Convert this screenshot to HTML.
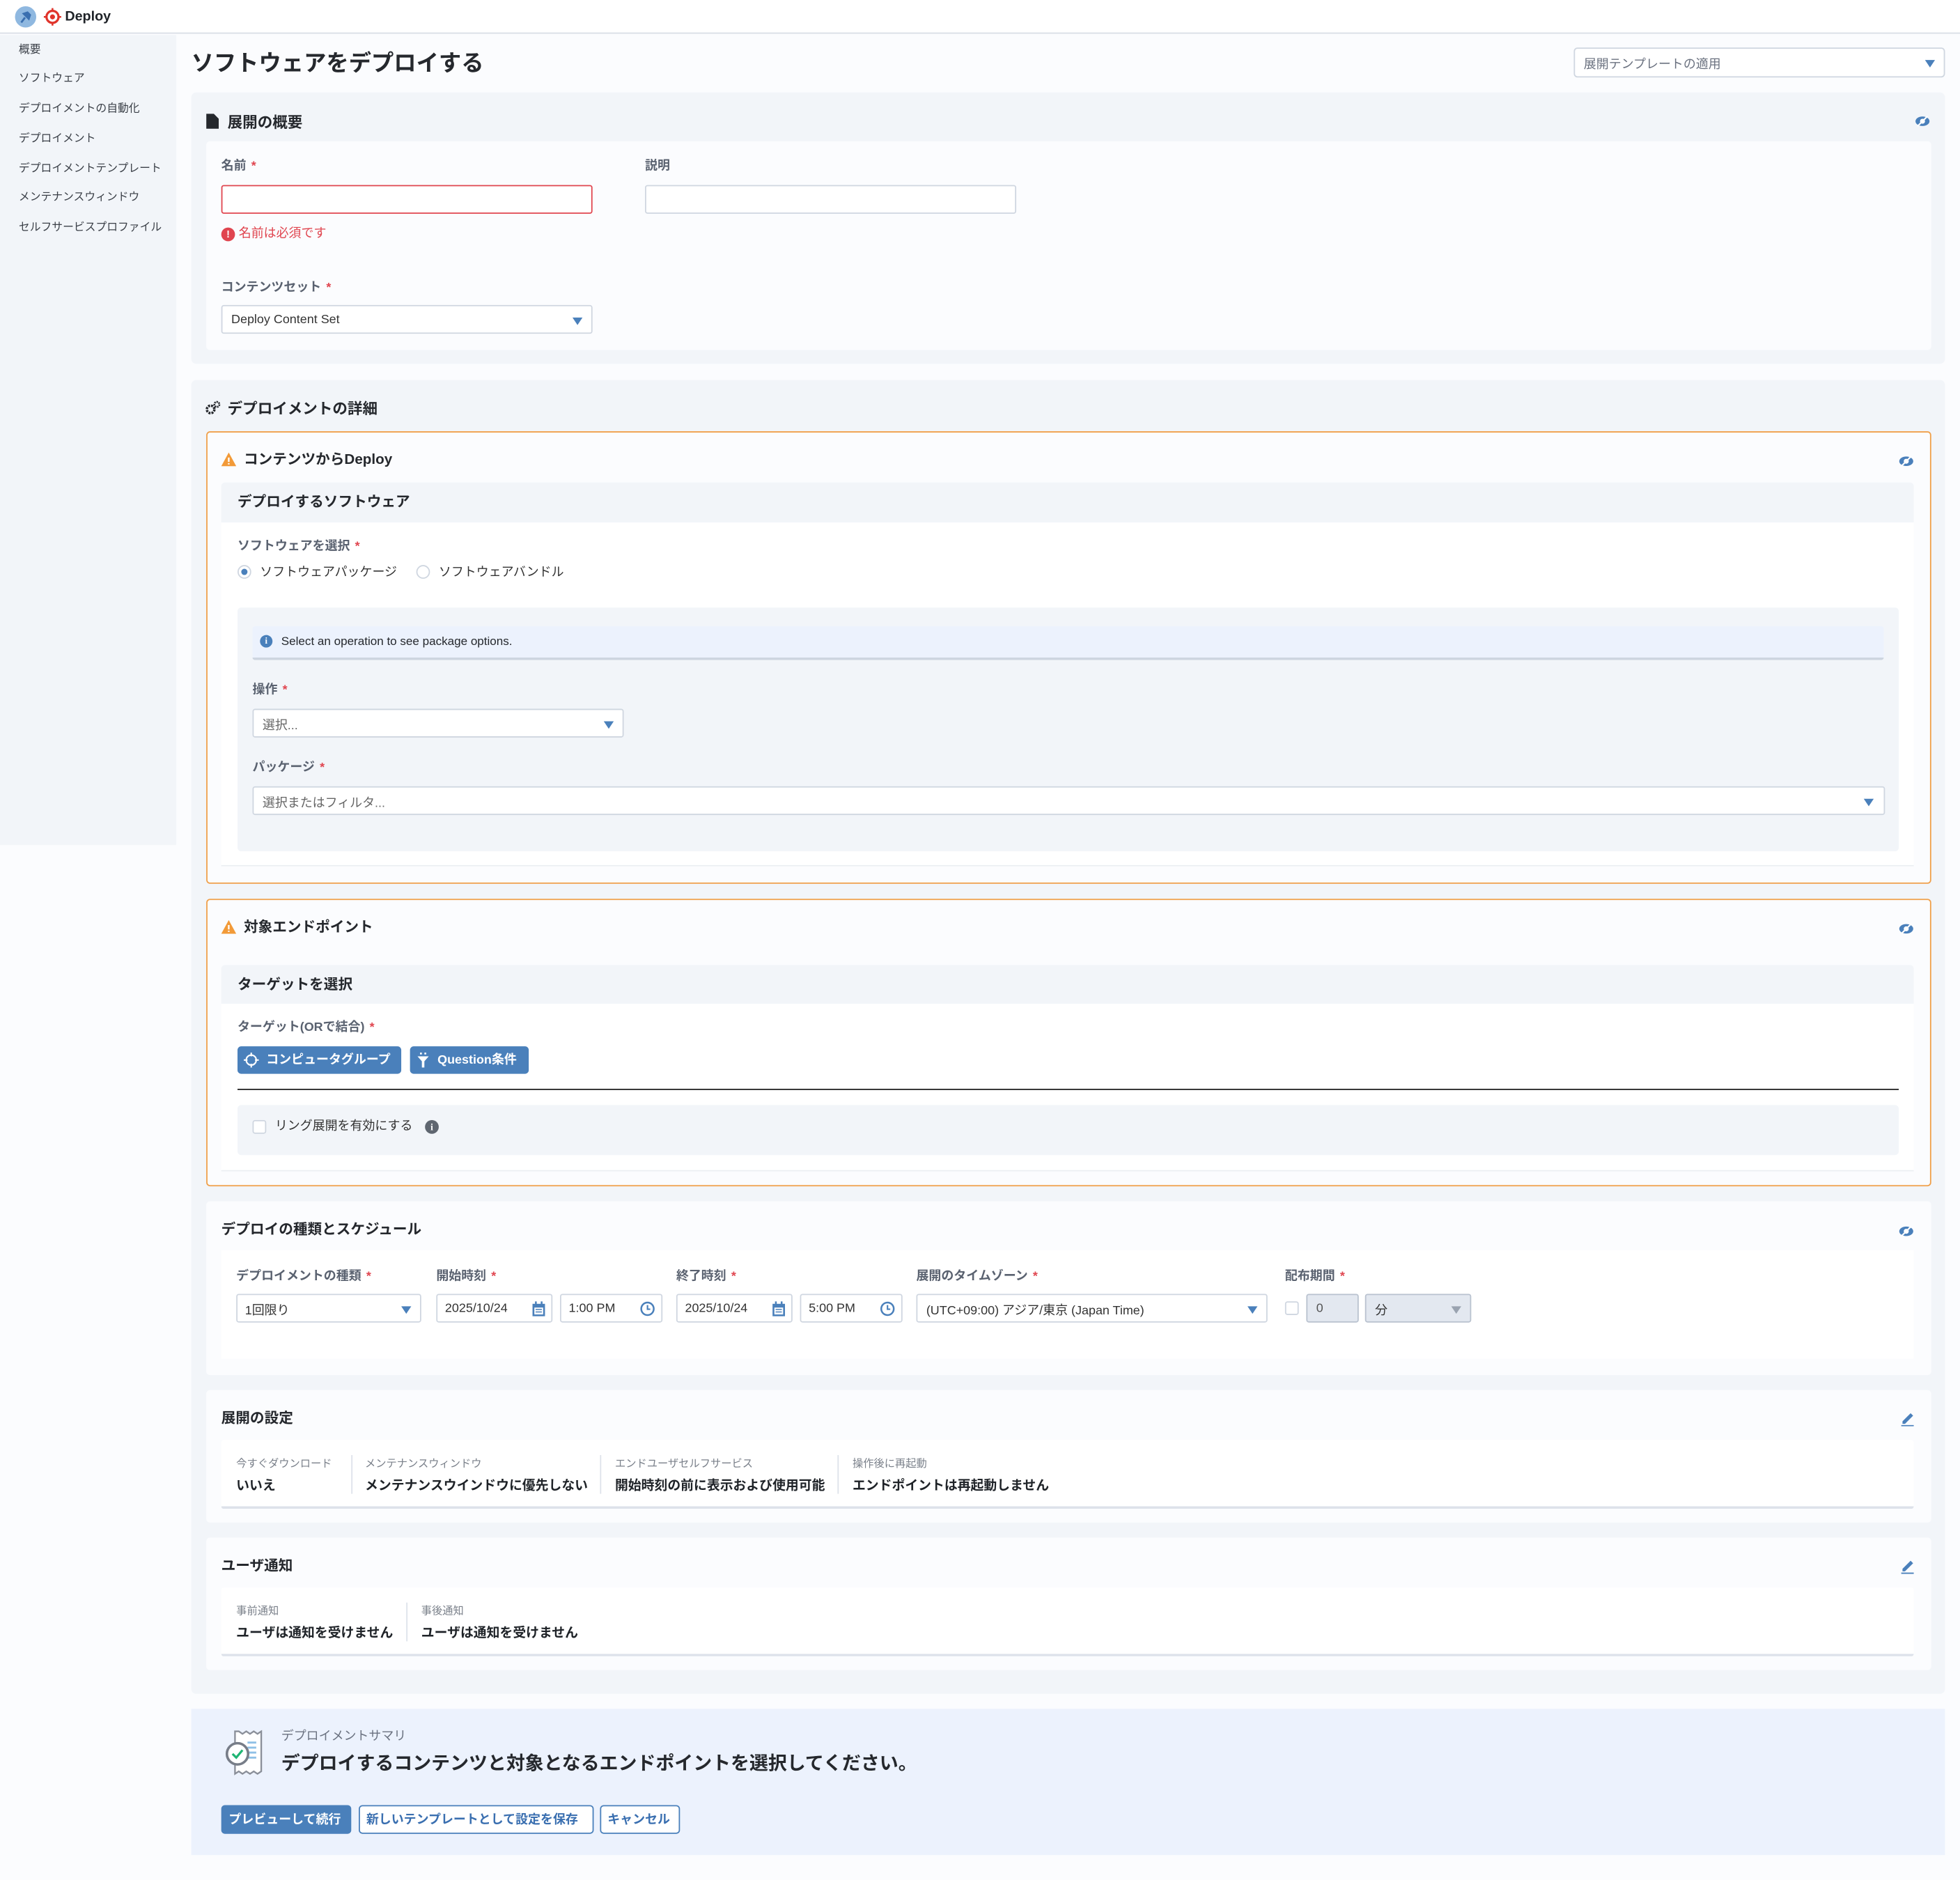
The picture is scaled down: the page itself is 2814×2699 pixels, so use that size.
<!DOCTYPE html>
<html><head><meta charset="utf-8"><style>
*{box-sizing:border-box;margin:0;padding:0}
html,body{width:2814px;height:2698px;overflow:hidden;background:#fbfcfe}
#w{position:absolute;left:0;top:0;width:1568px;height:1504px;transform:scale(1.79464);transform-origin:0 0;font-family:"Liberation Sans","Noto Sans CJK JP",sans-serif;color:#1f2328}
.a{position:absolute}
.t{position:absolute;white-space:nowrap;line-height:1;transform:translateY(-42%)}
.lbl{font-size:10px;font-weight:bold;color:#5a6270}
.req{color:#e0454f;margin-left:4px}
.inp{position:absolute;background:#fff;border:1px solid #cfd6e0;border-radius:2px;height:23px}
.it{position:absolute;top:50%;transform:translateY(-50%);left:7px;font-size:10px;color:#333;white-space:nowrap}
.arr{position:absolute;top:50%;margin-top:-2px;width:0;height:0;border-left:4.5px solid transparent;border-right:4.5px solid transparent;border-top:6px solid #4a80bb}
.gray{background:#f2f5f9}
.h{font-size:12px;font-weight:bold;color:#25282d}
.side{font-size:8.8px;color:#3b4048}
.sl{font-size:8.5px;color:#7a808a}
.sv{font-size:10.5px;font-weight:bold;color:#1f2328}
</style></head><body><div id="w">
<!-- header -->
<div class="a" style="left:0;top:0;width:1568px;height:27px;background:#fff;border-bottom:1px solid #d9dee6"></div>
<div class="a" style="left:12px;top:5px;width:17px;height:17px;border-radius:50%;background:#8fb8e0"></div>
<svg class="a" style="left:14px;top:7px" width="13" height="13" viewBox="0 0 13 13"><path d="M3 11 L6 7 M5 4 L9 8 L10 5 L8 3 Z" stroke="#3a6fb0" stroke-width="1.6" fill="#3a6fb0"/></svg>
<svg class="a" style="left:35px;top:6px" width="14" height="15" viewBox="0 0 14 15"><circle cx="7" cy="7.5" r="4.8" fill="none" stroke="#e0342b" stroke-width="1.8"/><circle cx="7" cy="7.5" r="2" fill="#e0342b"/><path d="M7 0.5v2.5M7 12v2.5M0 7.5h2.2M11.8 7.5h2.2" stroke="#e0342b" stroke-width="1.4"/></svg>
<div class="t" style="left:52px;top:13px;font-size:11px;font-weight:bold">Deploy</div>
<!-- sidebar -->
<div class="a gray" style="left:0;top:28px;width:141px;height:648px"></div>
<div class="t side" style="left:15px;top:39px">概要</div>
<div class="t side" style="left:15px;top:62px">ソフトウェア</div>
<div class="t side" style="left:15px;top:86px">デプロイメントの自動化</div>
<div class="t side" style="left:15px;top:110px">デプロイメント</div>
<div class="t side" style="left:15px;top:134px">デプロイメントテンプレート</div>
<div class="t side" style="left:15px;top:157px">メンテナンスウィンドウ</div>
<div class="t side" style="left:15px;top:181px">セルフサービスプロファイル</div>
<!-- title -->
<div class="t" style="left:153px;top:49px;font-size:18px;font-weight:bold;color:#25282d">ソフトウェアをデプロイする</div>
<div class="inp" style="left:1259px;top:38px;width:297px;height:24px;border-radius:3px"><div class="it" style="color:#6b7280">展開テンプレートの適用</div><div class="arr" style="right:7px"></div></div>
<!-- section 1 -->
<div class="a gray" style="left:153px;top:74px;width:1403px;height:217px;border-radius:4px"></div>
<svg class="a" style="left:165px;top:91px" width="10" height="12" viewBox="0 0 10 12"><path d="M0 0H6L10 4V12H0Z" fill="#25282d"/></svg>
<div class="t h" style="left:182px;top:97px">展開の概要</div>
<svg class="a" style="left:1532px;top:92px" width="12" height="10" viewBox="0 0 12 10"><ellipse cx="6" cy="5" rx="5.6" ry="3.8" fill="#4a80bb"/><circle cx="6" cy="5" r="2" fill="#fff"/><path d="M2 9L10 1" stroke="#fff" stroke-width="1.2"/></svg>
<div class="a" style="left:165px;top:113px;width:1380px;height:167px;background:#fbfcfe;border-radius:3px"></div>
<div class="t lbl" style="left:177px;top:133px">名前<span class="req">*</span></div>
<div class="inp" style="left:177px;top:148px;width:297px;border-color:#e0454f"></div>
<div class="a" style="left:177px;top:182px;width:11px;height:11px;border-radius:50%;background:#e0454f;color:#fff;font-size:8px;font-weight:bold;text-align:center;line-height:11px">!</div>
<div class="t" style="left:191px;top:187px;font-size:10px;color:#e0454f">名前は必須です</div>
<div class="t lbl" style="left:516px;top:133px">説明</div>
<div class="inp" style="left:516px;top:148px;width:297px"></div>
<div class="t lbl" style="left:177px;top:230px">コンテンツセット<span class="req">*</span></div>
<div class="inp" style="left:177px;top:244px;width:297px"><div class="it">Deploy Content Set</div><div class="arr" style="right:7px"></div></div>
<!-- section 2 -->
<div class="a gray" style="left:153px;top:304px;width:1403px;height:1051px;border-radius:4px"></div>
<svg class="a" style="left:164px;top:320px" width="13" height="12" viewBox="0 0 13 12"><circle cx="4.5" cy="7.5" r="3" fill="none" stroke="#25282d" stroke-width="2" stroke-dasharray="1.6 0.8"/><circle cx="9.5" cy="3.5" r="2" fill="none" stroke="#25282d" stroke-width="1.5" stroke-dasharray="1.2 0.6"/></svg>
<div class="t h" style="left:182px;top:326px">デプロイメントの詳細</div>
<!-- orange card 1 -->
<div class="a" style="left:165px;top:345px;width:1380px;height:362px;background:#fbfcfe;border:1px solid #f0a04a;border-radius:3px"></div>
<svg class="a" style="left:177px;top:362px" width="12" height="11" viewBox="0 0 12 11"><path d="M6 0L12 11H0Z" fill="#f29a38"/><path d="M6 4v3.5M6 8.5v1" stroke="#fff" stroke-width="1.3"/></svg>
<div class="t" style="left:195px;top:368px;font-size:11.5px;font-weight:bold;color:#25282d">コンテンツからDeploy</div>
<svg class="a" style="left:1519px;top:364px" width="12" height="10" viewBox="0 0 12 10"><ellipse cx="6" cy="5" rx="5.6" ry="3.8" fill="#4a80bb"/><circle cx="6" cy="5" r="2" fill="#fff"/><path d="M2 9L10 1" stroke="#fff" stroke-width="1.2"/></svg>
<div class="a gray" style="left:177px;top:386px;width:1354px;height:32px;border-radius:3px 3px 0 0"></div>
<div class="a" style="left:177px;top:418px;width:1354px;height:275px;background:#fff;border-bottom:1px solid #eceff3"></div>
<div class="t" style="left:190px;top:402px;font-size:11.5px;font-weight:bold;color:#25282d">デプロイするソフトウェア</div>
<div class="t lbl" style="left:190px;top:437px">ソフトウェアを選択<span class="req">*</span></div>
<div class="a" style="left:190px;top:452px;width:11px;height:11px;border-radius:50%;border:1px solid #cfd6e0;background:#fff"></div>
<div class="a" style="left:193px;top:455px;width:5px;height:5px;border-radius:50%;background:#4a80bb"></div>
<div class="t" style="left:208px;top:458px;font-size:10px;color:#333">ソフトウェアパッケージ</div>
<div class="a" style="left:333px;top:452px;width:11px;height:11px;border-radius:50%;border:1px solid #cfd6e0;background:#fff"></div>
<div class="t" style="left:351px;top:458px;font-size:10px;color:#333">ソフトウェアバンドル</div>
<div class="a gray" style="left:190px;top:486px;width:1329px;height:195px;border-radius:3px"></div>
<div class="a" style="left:202px;top:501px;width:1305px;height:27px;background:#ecf2fd;border-bottom:2px solid #cdd5e0;border-radius:2px"></div>
<div class="a" style="left:208px;top:508px;width:10px;height:10px;border-radius:50%;background:#4a80bb;color:#fff;font-size:7px;font-weight:bold;text-align:center;line-height:10px;font-family:'Liberation Serif',serif">i</div>
<div class="t" style="left:225px;top:513px;font-size:9.5px;color:#25282d">Select an operation to see package options.</div>
<div class="t lbl" style="left:202px;top:552px">操作<span class="req">*</span></div>
<div class="inp" style="left:202px;top:567px;width:297px"><div class="it" style="color:#666">選択...</div><div class="arr" style="right:7px"></div></div>
<div class="t lbl" style="left:202px;top:614px">パッケージ<span class="req">*</span></div>
<div class="inp" style="left:202px;top:629px;width:1306px"><div class="it" style="color:#666">選択またはフィルタ...</div><div class="arr" style="right:8px"></div></div>
<!-- orange card 2 -->
<div class="a" style="left:165px;top:719px;width:1380px;height:230px;background:#fbfcfe;border:1px solid #f0a04a;border-radius:3px"></div>
<svg class="a" style="left:177px;top:736px" width="12" height="11" viewBox="0 0 12 11"><path d="M6 0L12 11H0Z" fill="#f29a38"/><path d="M6 4v3.5M6 8.5v1" stroke="#fff" stroke-width="1.3"/></svg>
<div class="t" style="left:195px;top:742px;font-size:11.5px;font-weight:bold;color:#25282d">対象エンドポイント</div>
<svg class="a" style="left:1519px;top:738px" width="12" height="10" viewBox="0 0 12 10"><ellipse cx="6" cy="5" rx="5.6" ry="3.8" fill="#4a80bb"/><circle cx="6" cy="5" r="2" fill="#fff"/><path d="M2 9L10 1" stroke="#fff" stroke-width="1.2"/></svg>
<div class="a gray" style="left:177px;top:772px;width:1354px;height:31px;border-radius:3px 3px 0 0"></div>
<div class="a" style="left:177px;top:803px;width:1354px;height:134px;background:#fff;border-bottom:1px solid #eceff3"></div>
<div class="t" style="left:190px;top:788px;font-size:11.5px;font-weight:bold;color:#25282d">ターゲットを選択</div>
<div class="t lbl" style="left:190px;top:822px">ターゲット(ORで結合)<span class="req">*</span></div>
<div class="a" style="left:190px;top:837px;width:131px;height:22px;background:#4a80bb;border-radius:3px"></div>
<svg class="a" style="left:195px;top:842px" width="12" height="12" viewBox="0 0 12 12"><circle cx="6" cy="6" r="4" fill="none" stroke="#fff" stroke-width="1.2"/><path d="M6 0v3M6 9v3M0 6h3M9 6h3" stroke="#fff" stroke-width="1.2"/></svg>
<div class="t" style="left:213px;top:848px;font-size:10px;font-weight:bold;color:#fff">コンピュータグループ</div>
<div class="a" style="left:328px;top:837px;width:95px;height:22px;background:#4a80bb;border-radius:3px"></div>
<svg class="a" style="left:334px;top:842px" width="9" height="12" viewBox="0 0 9 12"><path d="M0 3H9L5.5 7V12H3.5V7Z" fill="#fff"/><rect x="2" y="0" width="1.5" height="1.5" fill="#fff"/><rect x="5.5" y="0" width="1.5" height="1.5" fill="#fff"/></svg>
<div class="t" style="left:350px;top:848px;font-size:10px;font-weight:bold;color:#fff">Question条件</div>
<div class="a" style="left:190px;top:871px;width:1329px;height:1px;background:#222"></div>
<div class="a gray" style="left:190px;top:884px;width:1329px;height:40px;border-radius:3px"></div>
<div class="a" style="left:202px;top:896px;width:11px;height:11px;border:1px solid #cfd6e0;background:#fff;border-radius:2px"></div>
<div class="t" style="left:220px;top:901px;font-size:10px;color:#333">リング展開を有効にする</div>
<div class="a" style="left:340px;top:896px;width:11px;height:11px;border-radius:50%;background:#5f6670;color:#fff;font-size:7.5px;font-weight:bold;text-align:center;line-height:11px;font-family:'Liberation Serif',serif">i</div>
<!-- schedule card -->
<div class="a" style="left:165px;top:961px;width:1380px;height:139px;background:#fbfcfe;border-radius:3px"></div>
<div class="t" style="left:177px;top:984px;font-size:11.5px;font-weight:bold;color:#25282d">デプロイの種類とスケジュール</div>
<svg class="a" style="left:1519px;top:980px" width="12" height="10" viewBox="0 0 12 10"><ellipse cx="6" cy="5" rx="5.6" ry="3.8" fill="#4a80bb"/><circle cx="6" cy="5" r="2" fill="#fff"/><path d="M2 9L10 1" stroke="#fff" stroke-width="1.2"/></svg>
<div class="a" style="left:177px;top:1000px;width:1354px;height:87px;background:#fff"></div>
<div class="t lbl" style="left:189px;top:1021px">デプロイメントの種類<span class="req">*</span></div>
<div class="t lbl" style="left:349px;top:1021px">開始時刻<span class="req">*</span></div>
<div class="t lbl" style="left:541px;top:1021px">終了時刻<span class="req">*</span></div>
<div class="t lbl" style="left:733px;top:1021px">展開のタイムゾーン<span class="req">*</span></div>
<div class="t lbl" style="left:1028px;top:1021px">配布期間<span class="req">*</span></div>
<div class="inp" style="left:189px;top:1035px;width:148px"><div class="it" style="left:6px">1回限り</div><div class="arr" style="right:7px"></div></div>
<div class="inp" style="left:349px;top:1035px;width:93px"><div class="it" style="left:6px">2025/10/24</div><svg class="a" style="right:5px;top:5px" width="10" height="12" viewBox="0 0 10 12"><rect x="0" y="2" width="10" height="10" fill="#4a80bb"/><rect x="1.5" y="5" width="7" height="5.5" fill="#fff"/><path d="M2.5 6.5h5M2.5 8.5h5" stroke="#4a80bb" stroke-width="0.8"/><rect x="2" y="0" width="1.4" height="3" fill="#4a80bb"/><rect x="6.6" y="0" width="1.4" height="3" fill="#4a80bb"/></svg></div>
<div class="inp" style="left:448px;top:1035px;width:82px"><div class="it" style="left:6px">1:00 PM</div><svg class="a" style="right:5px;top:5px" width="12" height="12" viewBox="0 0 12 12"><circle cx="6" cy="6" r="5" fill="none" stroke="#4a80bb" stroke-width="1.4"/><path d="M6 3v3.3h2.2" stroke="#4a80bb" stroke-width="1.2" fill="none"/></svg></div>
<div class="inp" style="left:541px;top:1035px;width:93px"><div class="it" style="left:6px">2025/10/24</div><svg class="a" style="right:5px;top:5px" width="10" height="12" viewBox="0 0 10 12"><rect x="0" y="2" width="10" height="10" fill="#4a80bb"/><rect x="1.5" y="5" width="7" height="5.5" fill="#fff"/><path d="M2.5 6.5h5M2.5 8.5h5" stroke="#4a80bb" stroke-width="0.8"/><rect x="2" y="0" width="1.4" height="3" fill="#4a80bb"/><rect x="6.6" y="0" width="1.4" height="3" fill="#4a80bb"/></svg></div>
<div class="inp" style="left:640px;top:1035px;width:82px"><div class="it" style="left:6px">5:00 PM</div><svg class="a" style="right:5px;top:5px" width="12" height="12" viewBox="0 0 12 12"><circle cx="6" cy="6" r="5" fill="none" stroke="#4a80bb" stroke-width="1.4"/><path d="M6 3v3.3h2.2" stroke="#4a80bb" stroke-width="1.2" fill="none"/></svg></div>
<div class="inp" style="left:733px;top:1035px;width:281px"><div class="it" style="left:7px">(UTC+09:00) アジア/東京 (Japan Time)</div><div class="arr" style="right:7px"></div></div>
<div class="a" style="left:1028px;top:1041px;width:11px;height:11px;border:1px solid #cfd6e0;background:#fff;border-radius:2px"></div>
<div class="inp" style="left:1045px;top:1035px;width:42px;background:#e3e8f0;border-color:#b9c2cf"><div class="it" style="color:#555">0</div></div>
<div class="inp" style="left:1092px;top:1035px;width:85px;background:#e3e8f0;border-color:#b9c2cf"><div class="it" style="color:#333">分</div><div class="arr" style="right:7px;border-top-color:#9aa3b0"></div></div>
<!-- settings card -->
<div class="a" style="left:165px;top:1112px;width:1380px;height:106px;background:#fbfcfe;border-radius:3px"></div>
<div class="t" style="left:177px;top:1135px;font-size:11.5px;font-weight:bold;color:#25282d">展開の設定</div>
<svg class="a" style="left:1520px;top:1129px" width="12" height="12" viewBox="0 0 12 12"><path d="M2 8L8.5 1.5L10.5 3.5L4 10H2Z" fill="#4a80bb"/><path d="M1 11.5h10" stroke="#4a80bb" stroke-width="1"/></svg>
<div class="a" style="left:177px;top:1152px;width:1354px;height:55px;background:#fff;border-bottom:2px solid #dde2ea;border-radius:2px"></div>
<div class="t sl" style="left:189px;top:1170px">今すぐダウンロード</div><div class="t sv" style="left:189px;top:1188px">いいえ</div>
<div class="a" style="left:281px;top:1164px;width:1px;height:31px;background:#dde2ea"></div>
<div class="t sl" style="left:292px;top:1170px">メンテナンスウィンドウ</div><div class="t sv" style="left:292px;top:1188px">メンテナンスウインドウに優先しない</div>
<div class="a" style="left:480px;top:1164px;width:1px;height:31px;background:#dde2ea"></div>
<div class="t sl" style="left:492px;top:1170px">エンドユーザセルフサービス</div><div class="t sv" style="left:492px;top:1188px">開始時刻の前に表示および使用可能</div>
<div class="a" style="left:670px;top:1164px;width:1px;height:31px;background:#dde2ea"></div>
<div class="t sl" style="left:682px;top:1170px">操作後に再起動</div><div class="t sv" style="left:682px;top:1188px">エンドポイントは再起動しません</div>
<!-- notify card -->
<div class="a" style="left:165px;top:1230px;width:1380px;height:106px;background:#fbfcfe;border-radius:3px"></div>
<div class="t" style="left:177px;top:1253px;font-size:11.5px;font-weight:bold;color:#25282d">ユーザ通知</div>
<svg class="a" style="left:1520px;top:1247px" width="12" height="12" viewBox="0 0 12 12"><path d="M2 8L8.5 1.5L10.5 3.5L4 10H2Z" fill="#4a80bb"/><path d="M1 11.5h10" stroke="#4a80bb" stroke-width="1"/></svg>
<div class="a" style="left:177px;top:1270px;width:1354px;height:55px;background:#fff;border-bottom:2px solid #dde2ea;border-radius:2px"></div>
<div class="t sl" style="left:189px;top:1288px">事前通知</div><div class="t sv" style="left:189px;top:1306px">ユーザは通知を受けません</div>
<div class="a" style="left:325px;top:1282px;width:1px;height:31px;background:#dde2ea"></div>
<div class="t sl" style="left:337px;top:1288px">事後通知</div><div class="t sv" style="left:337px;top:1306px">ユーザは通知を受けません</div>
<!-- summary -->
<div class="a" style="left:153px;top:1367px;width:1403px;height:117px;background:#ecf2fd"></div>
<svg class="a" style="left:178px;top:1384px" width="34" height="37" viewBox="0 0 34 37"><path d="M10 1V35L13 33L16 35L19 33L22 35L25 33L28 35L31 33V1L28 3L25 1L22 3L19 1L16 3L13 1Z" fill="#fff" stroke="#8a8f99" stroke-width="1.3"/><path d="M20 10h7M20 14h7M20 18h7M20 22h7" stroke="#8fc0e6" stroke-width="1.6"/><circle cx="12" cy="19" r="8.5" fill="#fff" stroke="#777d88" stroke-width="2"/><path d="M8 19l3 3 5-6" stroke="#1fb573" stroke-width="1.8" fill="none"/></svg>
<div class="t" style="left:225px;top:1389px;font-size:10px;color:#6b7280">デプロイメントサマリ</div>
<div class="t" style="left:225px;top:1410px;font-size:15px;font-weight:bold;color:#25282d">デプロイするコンテンツと対象となるエンドポイントを選択してください。</div>
<div class="a" style="left:177px;top:1444px;width:104px;height:23px;background:#4a80bb;border-radius:3px"></div>
<div class="t" style="left:183px;top:1456px;font-size:10px;font-weight:bold;color:#fff">プレビューして続行</div>
<div class="a" style="left:287px;top:1444px;width:188px;height:23px;background:#fff;border:1px solid #4a80bb;border-radius:3px"></div>
<div class="t" style="left:293px;top:1456px;font-size:10px;font-weight:bold;color:#3a6fb0">新しいテンプレートとして設定を保存</div>
<div class="a" style="left:480px;top:1444px;width:64px;height:23px;background:#fff;border:1px solid #4a80bb;border-radius:3px"></div>
<div class="t" style="left:486px;top:1456px;font-size:10px;font-weight:bold;color:#3a6fb0">キャンセル</div>
</div></body></html>
